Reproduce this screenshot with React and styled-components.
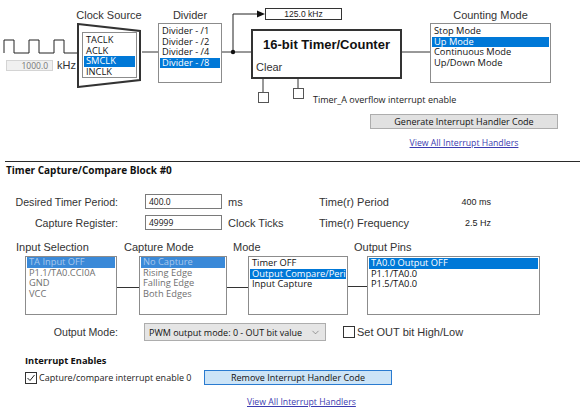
import React from "react";
import styled, { createGlobalStyle } from "styled-components";
import { ChevronDown } from "lucide-react";

const ui = `"Open Sans", "Noto Sans", sans-serif`;
const classic = `"Liberation Sans", Arial, sans-serif`;

const GlobalStyle = createGlobalStyle`
  html, body {
    margin: 0;
    padding: 0;
    background: #fff;
  }
  body {
    width: 580px;
    height: 411px;
    overflow: hidden;
    font-family: ${ui};
    color: #111;
  }
`;

const ListBox = ({ items, selected, width, height, disabled, row = 10.5, pad = 2 }) => (
  <Box $w={width} $h={height} $pad={pad}>
    {items.map((label, i) => (
      <Item key={label} $row={row} $sel={i === selected} $off={disabled}>
        {label}
      </Item>
    ))}
  </Box>
);

const CheckBox = ({ checked }) => (
  <Tick>
    {checked && (
      <svg width="10" height="10" viewBox="0 0 10 10">
        <polyline points="1.5,5 4,7.5 8.5,2" fill="none" stroke="#222" strokeWidth="1" />
      </svg>
    )}
  </Tick>
);

const App = () => {
  return (
    <>
      <GlobalStyle />
      <Page>
        <Diagram>
          <Wires width="580" height="110">
            <path d="M4 53 V40 H14 V53 H29 V40 H39 V53 H54 V40 H64 V53 H78" fill="none" stroke="#222" strokeWidth="1" />
            <path d="M142 52 H158 M222 52 H251 M402 52 H430 M263 79 V92 M298 79 V88" stroke="#333" strokeWidth="1" fill="none" />
            <path d="M233 52 V14 H259" stroke="#222" strokeWidth="1" fill="none" />
            <polygon points="257,10.5 265,14 257,17.5" fill="#111" />
            <circle cx="233" cy="52" r="2.2" fill="#111" />
          </Wires>

          <Node $x={6} $y={59}>
            <FreqRow>
              <FreqInput>1000.0</FreqInput>
              <Unit>kHz</Unit>
            </FreqRow>
          </Node>

          <Node $x={76} $y={9}>
            <Caption>Clock Source</Caption>
            <MuxBody>
              <MuxShape width="66" height="65" viewBox="0 0 66 65">
                <polygon points="2,1 64,8 64,57 2,64" fill="#fff" stroke="#333" strokeWidth="2" />
              </MuxShape>
              <ListBox items={["TACLK", "ACLK", "SMCLK", "INCLK"]} selected={2} width={55} height={46} />
            </MuxBody>
          </Node>

          <Node $x={158} $y={9}>
            <Caption>Divider</Caption>
            <ListBox
              items={["Divider - /1", "Divider - /2", "Divider - /4", "Divider - /8"]}
              selected={3}
              width={64}
              height={60}
            />
          </Node>

          <Node $x={265} $y={8}>
            <RateBox>125.0 kHz</RateBox>
          </Node>

          <Node $x={251} $y={29}>
            <TimerBox>
              <TimerTitle>16-bit Timer/Counter</TimerTitle>
              <TimerClear>Clear</TimerClear>
            </TimerBox>
          </Node>

          <Node $x={258} $y={92}>
            <Pin />
          </Node>
          <Node $x={293} $y={88}>
            <OverflowRow>
              <Pin />
              <SmallText>Timer_A overflow interrupt enable</SmallText>
            </OverflowRow>
          </Node>

          <Node $x={430} $y={9}>
            <Caption>Counting Mode</Caption>
            <ListBox
              items={["Stop Mode", "Up Mode", "Continuous Mode", "Up/Down Mode"]}
              selected={1}
              width={121}
              height={60}
            />
          </Node>
        </Diagram>

        <Actions>
          <Button>Generate Interrupt Handler Code</Button>
          <Link>View All Interrupt Handlers</Link>
        </Actions>

        <Separator />
        <BlockTitle>Timer Capture/Compare Block #0</BlockTitle>

        <FormGrid>
          <FieldLabel>Desired Timer Period:</FieldLabel>
          <TextInput>400.0</TextInput>
          <UnitLabel>ms</UnitLabel>
          <InfoLabel>Time(r) Period</InfoLabel>
          <InfoValue>400 ms</InfoValue>

          <FieldLabel>Capture Register:</FieldLabel>
          <TextInput>49999</TextInput>
          <UnitLabel>Clock Ticks</UnitLabel>
          <InfoLabel>Time(r) Frequency</InfoLabel>
          <InfoValue>2.5 Hz</InfoValue>
        </FormGrid>

        <Chain>
          <Stage>
            <StageLabel $shift={9}>Input Selection</StageLabel>
            <ListBox
              items={["TA Input OFF", "P1.1/TA0.CCI0A", "GND", "VCC"]}
              selected={0}
              width={92}
              height={59}
              disabled
              pad={0}
            />
          </Stage>
          <Wire $w={22} $top={46} />
          <Stage>
            <StageLabel $shift={15}>Capture Mode</StageLabel>
            <ListBox
              items={["No Capture", "Rising Edge", "Falling Edge", "Both Edges"]}
              selected={0}
              width={88}
              height={59}
              disabled
              pad={0}
            />
          </Stage>
          <Wire $w={21} $top={46} />
          <Stage>
            <StageLabel $shift={15}>Mode</StageLabel>
            <ListBox
              items={["Timer OFF", "Output Compare/Period", "Input Capture"]}
              selected={1}
              width={100}
              height={59}
              pad={1}
            />
          </Stage>
          <Wire $w={19} $top={45} />
          <Stage>
            <StageLabel $shift={13}>Output Pins</StageLabel>
            <ListBox
              items={["TA0.0 Output OFF", "P1.1/TA0.0", "P1.5/TA0.0"]}
              selected={0}
              width={173}
              height={59}
              pad={1}
            />
          </Stage>
        </Chain>

        <OutputRow>
          <RowLabel>Output Mode:</RowLabel>
          <Select>
            <span>PWM output mode: 0 - OUT bit value</span>
            <ChevronDown size={11} strokeWidth={1.2} color="#555" />
          </Select>
          <CheckOption $gap={17}>
            <CheckBox />
            <OptionText>Set OUT bit High/Low</OptionText>
          </CheckOption>
        </OutputRow>

        <Interrupts>
          <SubTitle>Interrupt Enables</SubTitle>
          <EnableRow>
            <EnableOption>
              <CheckBox checked />
              <SmallText>Capture/compare interrupt enable 0</SmallText>
            </EnableOption>
            <Button $active>Remove Interrupt Handler Code</Button>
          </EnableRow>
          <LinkRow>
            <Link>View All Interrupt Handlers</Link>
          </LinkRow>
        </Interrupts>
        <BottomRule />
      </Page>
    </>
  );
};

const Page = styled.div`
  width: 580px;
  height: 411px;
  overflow: hidden;
`;

const Diagram = styled.div`
  position: relative;
  height: 110px;
`;

const Wires = styled.svg`
  position: absolute;
  left: 0;
  top: 0;
`;

const Node = styled.div`
  position: absolute;
  left: ${(p) => p.$x}px;
  top: ${(p) => p.$y}px;
  display: flex;
  flex-direction: column;
  align-items: center;
`;

const Caption = styled.div`
  font-family: ${classic};
  font-size: 11px;
  line-height: 13px;
  height: 13px;
  margin-bottom: 1px;
  color: #333;
  white-space: nowrap;
`;

const FreqRow = styled.div`
  display: flex;
  align-items: center;
`;

const FreqInput = styled.div`
  box-sizing: border-box;
  width: 47px;
  height: 11px;
  background: #f0f0f0;
  border: 1px solid #d4d4d4;
  font-family: ${ui};
  font-size: 8.5px;
  line-height: 9px;
  text-align: right;
  padding-right: 4px;
  color: #777;
`;

const Unit = styled.span`
  font-family: ${classic};
  font-size: 11px;
  color: #333;
  margin-left: 4px;
`;

const MuxBody = styled.div`
  position: relative;
  box-sizing: border-box;
  width: 66px;
  height: 65px;
  padding: 9px 0 0 6px;
`;

const MuxShape = styled.svg`
  position: absolute;
  left: 0;
  top: 0;
`;

const Box = styled.div`
  position: relative;
  box-sizing: border-box;
  width: ${(p) => p.$w}px;
  height: ${(p) => p.$h}px;
  border: 1px solid #8c8c8c;
  background: #fff;
  padding: ${(p) => p.$pad}px 1px 0;
  font-family: ${ui};
  font-size: 9.3px;
  overflow: hidden;
`;

const Item = styled.div`
  height: ${(p) => p.$row}px;
  line-height: ${(p) => p.$row}px;
  padding-left: 2px;
  white-space: nowrap;
  background: ${(p) => (p.$sel ? (p.$off ? "#3a89d8" : "#0078d7") : "transparent")};
  color: ${(p) => (p.$sel ? (p.$off ? "#a8c8ec" : "#fff") : p.$off ? "#6f6f6f" : "#111")};
`;

const RateBox = styled.div`
  box-sizing: border-box;
  width: 77px;
  height: 12px;
  border: 1px solid #333;
  font-family: ${classic};
  font-size: 8.5px;
  line-height: 10px;
  text-align: center;
  color: #222;
`;

const TimerBox = styled.div`
  box-sizing: border-box;
  width: 151px;
  height: 50px;
  border: 2px solid #333;
  background: #fff;
`;

const TimerTitle = styled.div`
  font-family: ${classic};
  font-weight: bold;
  font-size: 13px;
  line-height: 16px;
  padding-top: 6px;
  text-align: center;
  color: #111;
`;

const TimerClear = styled.div`
  font-family: ${classic};
  font-size: 11px;
  line-height: 13px;
  margin-top: 8px;
  padding-left: 3px;
  color: #333;
`;

const Pin = styled.div`
  box-sizing: border-box;
  width: 11px;
  height: 11px;
  border: 1px solid #555;
  background: #fff;
`;

const OverflowRow = styled.div`
  display: flex;
  align-items: flex-start;
  gap: 9px;
  & > span {
    margin-top: 6px;
  }
`;

const SmallText = styled.span`
  font-family: ${ui};
  font-size: 9px;
  line-height: 12px;
  color: #222;
  white-space: nowrap;
`;

const Actions = styled.div`
  display: flex;
  flex-direction: column;
  align-items: center;
  width: 188px;
  margin: 4px 0 0 370px;
  gap: 8px;
`;

const Button = styled.div`
  box-sizing: border-box;
  width: 188px;
  height: 15px;
  background: ${(p) => (p.$active ? "#cce4f7" : "#e1e1e1")};
  border: 1px solid ${(p) => (p.$active ? "#2a7bd0" : "#adadad")};
  font-family: ${ui};
  font-size: 9px;
  line-height: 13px;
  text-align: center;
  color: #111;
  white-space: nowrap;
`;

const Link = styled.span`
  font-family: ${ui};
  font-size: 8.7px;
  line-height: 12px;
  color: #3b3bb0;
  text-decoration: underline;
  white-space: nowrap;
`;

const Separator = styled.div`
  height: 1px;
  margin: 12px 0 0 5px;
  background: #2a2a2a;
`;

const BlockTitle = styled.div`
  font-family: ${ui};
  font-weight: 700;
  font-size: 10px;
  line-height: 12px;
  margin: 2px 0 0 6px;
  color: #111;
`;

const FormGrid = styled.div`
  display: grid;
  grid-template-columns: 145px 77px 97px 120px 52px;
  grid-auto-rows: 15px;
  row-gap: 6px;
  align-items: center;
  margin-top: 18px;
`;

const FieldLabel = styled.div`
  font-family: ${classic};
  font-size: 10.6px;
  color: #333;
  text-align: right;
  padding-right: 27px;
  white-space: nowrap;
`;

const TextInput = styled.div`
  box-sizing: border-box;
  height: 15px;
  border: 1px solid #7a7a7a;
  font-family: ${ui};
  font-size: 8.5px;
  line-height: 13px;
  padding-left: 3px;
  color: #111;
`;

const UnitLabel = styled.div`
  font-family: ${classic};
  font-size: 11px;
  color: #333;
  padding-left: 6px;
  white-space: nowrap;
`;

const InfoLabel = styled.div`
  font-family: ${classic};
  font-size: 11px;
  color: #333;
  white-space: nowrap;
`;

const InfoValue = styled.div`
  font-family: ${classic};
  font-size: 9px;
  color: #222;
  text-align: right;
  white-space: nowrap;
`;

const Chain = styled.div`
  display: flex;
  align-items: flex-start;
  margin-top: 11px;
  padding-left: 25px;
`;

const Stage = styled.div`
  display: flex;
  flex-direction: column;
`;

const StageLabel = styled.div`
  margin-left: ${(p) => -p.$shift}px;
  margin-bottom: 2px;
  height: 13px;
  font-family: ${classic};
  font-size: 11px;
  line-height: 13px;
  color: #333;
  white-space: nowrap;
`;

const Wire = styled.div`
  width: ${(p) => p.$w}px;
  height: 1px;
  margin-top: ${(p) => p.$top}px;
  background: #333;
`;

const OutputRow = styled.div`
  display: flex;
  align-items: center;
  height: 18px;
  margin-top: 8px;
`;

const RowLabel = styled.div`
  box-sizing: border-box;
  width: 144px;
  padding-right: 26px;
  text-align: right;
  font-family: ${classic};
  font-size: 10.6px;
  color: #333;
`;

const Select = styled.div`
  box-sizing: border-box;
  display: flex;
  align-items: center;
  justify-content: space-between;
  width: 182px;
  height: 18px;
  padding: 0 4px 0 4px;
  background: #e5e5e5;
  border: 1px solid #adadad;
  font-family: ${ui};
  font-size: 9px;
  color: #111;
  white-space: nowrap;
`;

const CheckOption = styled.div`
  display: flex;
  align-items: center;
  gap: 2px;
  margin-left: ${(p) => p.$gap}px;
`;

const Tick = styled.div`
  box-sizing: border-box;
  display: flex;
  align-items: center;
  justify-content: center;
  width: 12px;
  height: 12px;
  border: 1px solid #333;
  background: #fff;
`;

const OptionText = styled.span`
  font-family: ${classic};
  font-size: 11px;
  color: #333;
  white-space: nowrap;
`;

const Interrupts = styled.div`
  padding-left: 25px;
  margin-top: 14px;
`;

const SubTitle = styled.div`
  font-family: ${ui};
  font-weight: 700;
  font-size: 9.3px;
  line-height: 12px;
  color: #111;
`;

const EnableRow = styled.div`
  display: flex;
  align-items: center;
  margin-top: 3px;
`;

const EnableOption = styled.div`
  display: flex;
  align-items: center;
  gap: 2px;
  width: 179px;
`;

const LinkRow = styled.div`
  padding-left: 222px;
  margin-top: 8px;
  line-height: 12px;
`;

const BottomRule = styled.div`
  height: 2px;
  margin-top: 4px;
  background: #c8c8c8;
`;

export default App;
